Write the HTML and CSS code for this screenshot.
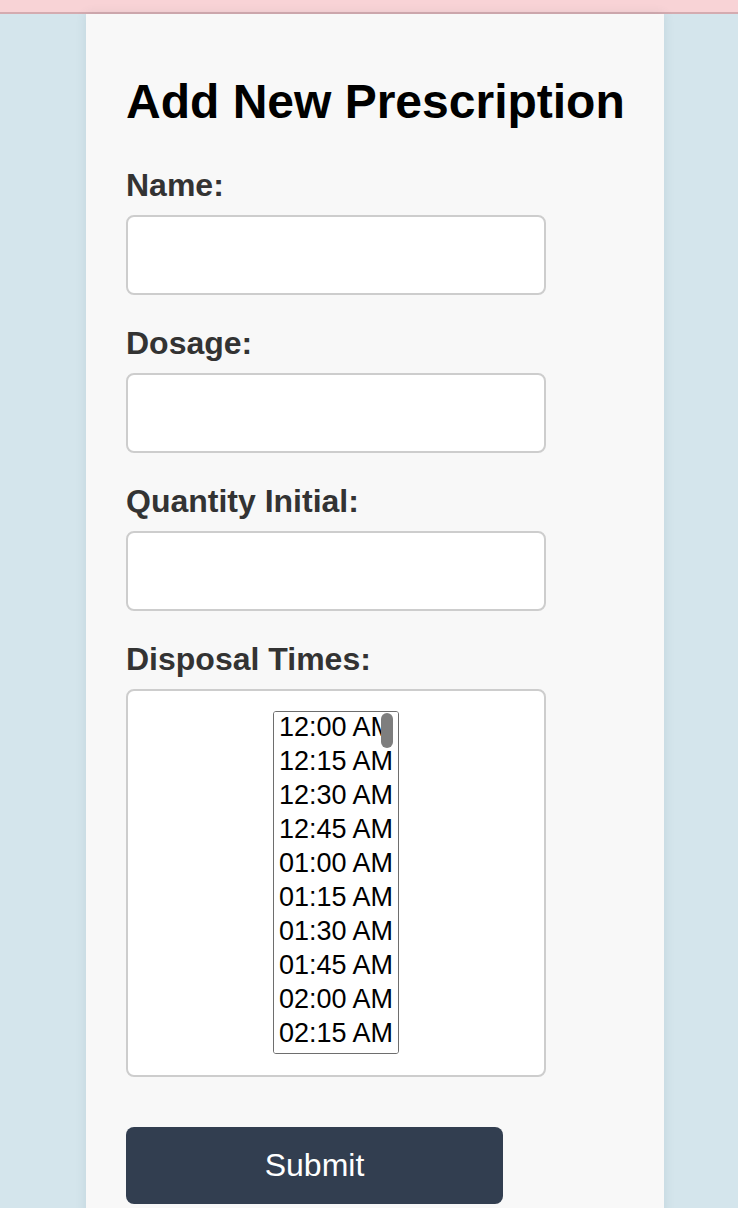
FILE: index.html
```html
<!DOCTYPE html>
<html lang="en">
<head>
<meta charset="utf-8">
<title>Add New Prescription</title>
<link rel="stylesheet" href="styles.css">
</head>
<body>
<div class="topbar"></div>
<main class="card">
  <h1 class="title">Add New Prescription</h1>
  <form class="form">
    <div class="field">
      <label class="label" for="name">Name:</label>
      <input class="input" id="name" type="text">
    </div>
    <div class="field">
      <label class="label" for="dosage">Dosage:</label>
      <input class="input" id="dosage" type="text">
    </div>
    <div class="field">
      <label class="label" for="qty">Quantity Initial:</label>
      <input class="input" id="qty" type="text">
    </div>
    <div class="field">
      <label class="label" for="times">Disposal Times:</label>
      <div class="times-box">
        <div class="listbox-wrap">
          <select class="listbox" id="times" multiple size="10">
            <option>12:00 AM</option><option>12:15 AM</option><option>12:30 AM</option><option>12:45 AM</option>
            <option>01:00 AM</option><option>01:15 AM</option><option>01:30 AM</option><option>01:45 AM</option>
            <option>02:00 AM</option><option>02:15 AM</option><option>02:30 AM</option><option>02:45 AM</option>
            <option>03:00 AM</option><option>03:15 AM</option><option>03:30 AM</option><option>03:45 AM</option>
            <option>04:00 AM</option><option>04:15 AM</option><option>04:30 AM</option><option>04:45 AM</option>
            <option>05:00 AM</option><option>05:15 AM</option><option>05:30 AM</option><option>05:45 AM</option>
            <option>06:00 AM</option><option>06:15 AM</option><option>06:30 AM</option><option>06:45 AM</option>
            <option>07:00 AM</option><option>07:15 AM</option><option>07:30 AM</option><option>07:45 AM</option>
            <option>08:00 AM</option><option>08:15 AM</option><option>08:30 AM</option><option>08:45 AM</option>
            <option>09:00 AM</option><option>09:15 AM</option><option>09:30 AM</option><option>09:45 AM</option>
            <option>10:00 AM</option><option>10:15 AM</option><option>10:30 AM</option><option>10:45 AM</option>
            <option>11:00 AM</option><option>11:15 AM</option><option>11:30 AM</option><option>11:45 AM</option>
            <option>12:00 PM</option><option>12:15 PM</option><option>12:30 PM</option><option>12:45 PM</option>
            <option>01:00 PM</option><option>01:15 PM</option><option>01:30 PM</option><option>01:45 PM</option>
            <option>02:00 PM</option><option>02:15 PM</option><option>02:30 PM</option><option>02:45 PM</option>
            <option>03:00 PM</option><option>03:15 PM</option><option>03:30 PM</option><option>03:45 PM</option>
            <option>04:00 PM</option><option>04:15 PM</option><option>04:30 PM</option><option>04:45 PM</option>
            <option>05:00 PM</option><option>05:15 PM</option><option>05:30 PM</option><option>05:45 PM</option>
            <option>06:00 PM</option><option>06:15 PM</option><option>06:30 PM</option><option>06:45 PM</option>
            <option>07:00 PM</option><option>07:15 PM</option><option>07:30 PM</option><option>07:45 PM</option>
            <option>08:00 PM</option><option>08:15 PM</option><option>08:30 PM</option><option>08:45 PM</option>
            <option>09:00 PM</option><option>09:15 PM</option><option>09:30 PM</option><option>09:45 PM</option>
            <option>10:00 PM</option><option>10:15 PM</option><option>10:30 PM</option><option>10:45 PM</option>
            <option>11:00 PM</option><option>11:15 PM</option><option>11:30 PM</option><option>11:45 PM</option>
          </select>
          <span class="thumb"></span>
        </div>
      </div>
    </div>
    <button class="submit" type="button">Submit</button>
  </form>
</main>
</body>
</html>
```

FILE: styles.css
```css
html, body {
  margin: 0;
  padding: 0;
}

body {
  background: #d4e5ec;
  font-family: "Liberation Sans", Arial, sans-serif;
  overflow: hidden;
}

.topbar {
  height: 12px;
  background: #f8d3d6;
  border-bottom: 2px solid #d4abb0;
}

.card {
  box-sizing: border-box;
  width: 578px;
  margin-left: 86px;
  padding: 60px 30px 40px 40px;
  background: #f8f8f8;
  box-shadow: 0 0 10px rgba(60, 90, 110, 0.12);
  min-height: 1300px;
}

.title {
  margin: 0 0 38px;
  font-size: 48px;
  line-height: 1.15;
  font-weight: 700;
  color: #000;
  white-space: nowrap;
}

.form {
  display: flex;
  flex-direction: column;
  align-items: flex-start;
}

.field {
  display: flex;
  flex-direction: column;
  align-items: flex-start;
}

.field + .field {
  margin-top: 30px;
}

.label {
  display: block;
  margin-bottom: 12px;
  font-size: 32px;
  line-height: 36px;
  font-weight: 700;
  color: #333;
}

.input {
  box-sizing: border-box;
  width: 420px;
  height: 80px;
  margin: 0;
  padding: 0 16px;
  background: #fff;
  border: 2px solid #cdcdcd;
  border-radius: 8px;
  font-family: inherit;
  font-size: 27px;
  outline: none;
}

.times-box {
  box-sizing: border-box;
  width: 420px;
  padding: 20px 0 21px;
  background: #fff;
  border: 2px solid #cdcdcd;
  border-radius: 8px;
  display: flex;
  justify-content: center;
}

.listbox-wrap {
  position: relative;
}

.listbox {
  display: block;
  box-sizing: border-box;
  width: 126px;
  height: 343px;
  margin: 0;
  padding: 0;
  background: #fff;
  border: 1px solid #6e6e6e;
  border-radius: 3px;
  font-family: "Liberation Sans", Arial, sans-serif;
  font-size: 27px;
  color: #000;
  scrollbar-width: none;
  outline: none;
}

.listbox::-webkit-scrollbar {
  display: none;
}

.listbox option {
  padding: 0 1px 0 5px;
  line-height: 34px;
  min-height: 34px;
  color: #000;
}

.thumb {
  position: absolute;
  top: 2px;
  right: 6px;
  width: 12px;
  height: 35px;
  border-radius: 6px;
  background: #7e7e7e;
}

.submit {
  margin-top: 50px;
  width: 377px;
  height: 77px;
  padding: 0;
  background: #323e50;
  color: #fff;
  border: none;
  border-radius: 8px;
  font-family: "Liberation Sans", Arial, sans-serif;
  font-size: 32px;
  cursor: pointer;
}
```
